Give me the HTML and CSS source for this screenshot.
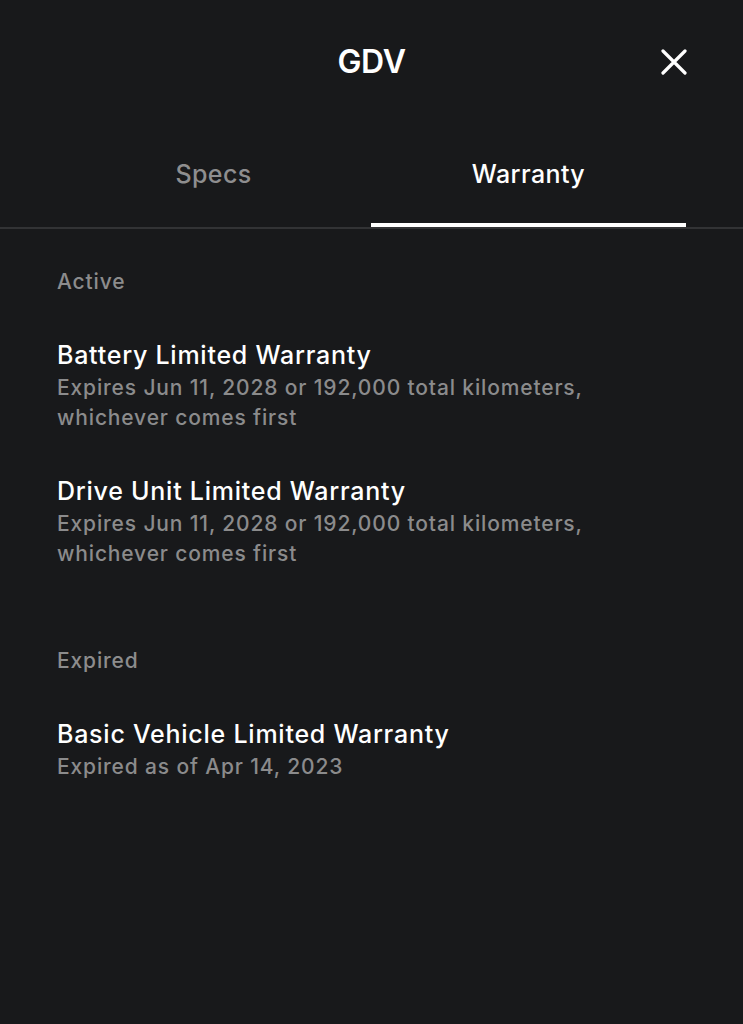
FILE: index.html
```html
<!DOCTYPE html>
<html lang="en">
<head>
<meta charset="utf-8">
<title>GDV</title>
<link rel="stylesheet" href="styles.css">
</head>
<body>
<div class="sheet">
  <header class="topbar">
    <div class="spacer"></div>
    <h1 class="title">GDV</h1>
    <button class="close" aria-label="Close">
      <svg viewBox="0 0 26 26" width="26" height="26"><path d="M2 2 L24 24 M24 2 L2 24" stroke="#ffffff" stroke-width="3.2" stroke-linecap="round" fill="none"/></svg>
    </button>
  </header>
  <nav class="tabs">
    <div class="tab">Specs</div>
    <div class="tab active">Warranty</div>
  </nav>
  <main class="content">
    <section class="group">
      <div class="label">Active</div>
      <div class="item">
        <div class="item-title">Battery Limited Warranty</div>
        <div class="item-sub">Expires Jun 11, 2028 or 192,000 total kilometers,<br>whichever comes first</div>
      </div>
      <div class="item">
        <div class="item-title">Drive Unit Limited Warranty</div>
        <div class="item-sub">Expires Jun 11, 2028 or 192,000 total kilometers,<br>whichever comes first</div>
      </div>
    </section>
    <section class="group">
      <div class="label">Expired</div>
      <div class="item">
        <div class="item-title">Basic Vehicle Limited Warranty</div>
        <div class="item-sub">Expired as of Apr 14, 2023</div>
      </div>
    </section>
  </main>
</div>
</body>
</html>
```
FILE: styles.css
```css
html, body {
  margin: 0;
  padding: 0;
  background: #18191b;
}
body {
  font-family: Inter, "Noto Sans", "Liberation Sans", sans-serif;
  color: #f4f4f4;
  min-height: 1024px;
}
.sheet {
  width: 743px;
}
.topbar {
  height: 124px;
  display: grid;
  grid-template-columns: 1fr auto 1fr;
  align-items: center;
  padding: 0 56px;
  box-sizing: border-box;
}
.title {
  margin: 0;
  font-size: 32px;
  font-weight: 600;
  letter-spacing: -0.3px;
  color: #ffffff;
  line-height: 40px;
}
.close {
  justify-self: end;
  background: none;
  border: 0;
  padding: 0;
  width: 26px;
  height: 26px;
  display: flex;
}
.tabs {
  display: flex;
  padding: 0 57px 0 56px;
  margin-top: 2px;
  border-bottom: 2px solid #323335;
}
.tab {
  flex: 1;
  text-align: center;
  font-size: 25px;
  font-weight: 500;
  letter-spacing: 0.4px;
  line-height: 36px;
  padding: 30px 0 31px;
  color: #8e8e8f;
  border-bottom: 4px solid transparent;
}
.tab.active {
  color: #ffffff;
  border-bottom-color: #ffffff;
}
.content {
  padding: 38px 56px 0 57px;
}
.group + .group {
  margin-top: 77px;
}
.label {
  font-size: 21px;
  font-weight: 500;
  letter-spacing: 0.85px;
  line-height: 30px;
  color: #8c8c8d;
}
.item {
  margin-top: 41px;
}
.item-title {
  font-size: 25px;
  font-weight: 500;
  letter-spacing: 0.75px;
  line-height: 34px;
  color: #ffffff;
}
.item-sub {
  margin-top: 1px;
  font-size: 21px;
  font-weight: 500;
  letter-spacing: 0.85px;
  line-height: 30px;
  color: #8b8b8c;
}
```
